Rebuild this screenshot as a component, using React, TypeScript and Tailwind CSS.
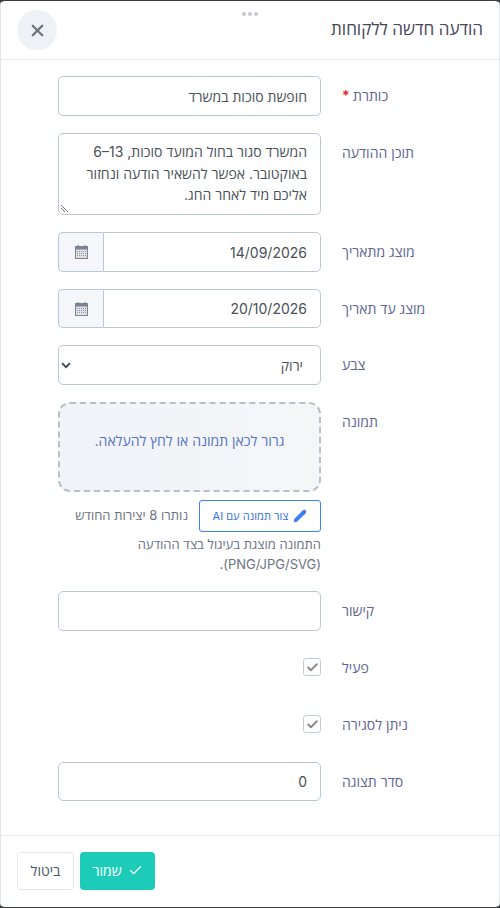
import React from "react";
import { X, Check, Pencil } from "lucide-react";

const font = "[font-family:Inter,'Open_Sans',sans-serif]";

function CalIcon() {
  return (
    <svg width="13" height="14" viewBox="0 0 13 14" fill="none">
      <rect x="0.5" y="1.5" width="12" height="12" fill="#dfe1e7" stroke="#7d8292" />
      <rect x="0" y="1" width="13" height="3.5" fill="#7d8292" />
      <rect x="2.5" y="0" width="1.2" height="2" fill="#7d8292" />
      <rect x="9.3" y="0" width="1.2" height="2" fill="#7d8292" />
      <path d="M2 6.5h9M2 8.5h9M2 10.5h9" stroke="#9297a6" strokeWidth="1" strokeDasharray="1 1" />
    </svg>
  );
}

function Row({ label, children, required }: { label: string; children: React.ReactNode; required?: boolean }) {
  return (
    <div className="flex items-start">
      <div className="ml-[21px] w-[141px] shrink-0 pt-[9px] text-left text-[14px] leading-[21px] text-[#5e6494]">
        {label}
        {required && <span className="text-[#e3242b] font-semibold"> *</span>}
      </div>
      <div className="w-[263px] shrink-0">{children}</div>
    </div>
  );
}

const inputCls = "flex items-center w-full bg-white border border-[#bcc6da] rounded-[5px] px-[13px] text-[14px] text-[#495057]";

function Checkbox() {
  return (
    <div className="w-[18px] h-[18px] bg-white border border-[#c3cbdd] rounded-[3px] flex items-center justify-center">
      <Check size={13} strokeWidth={3.5} className="text-[#8a8a8a]" />
    </div>
  );
}

function DateRow({ label, value, h }: { label: string; value: string; h: string }) {
  return (
    <Row label={label}>
      <div className={`flex ${h}`}>
        <div className="flex flex-1 items-center bg-white border border-[#bcc6da] rounded-r-[5px] px-[13px] text-[14px] text-[#495057]">
          {value}
        </div>
        <div className="w-[45px] flex items-center justify-center bg-[#f5f6f9] border border-r-0 border-[#bcc6da] rounded-l-[5px]">
          <CalIcon />
        </div>
      </div>
    </Row>
  );
}

export default function App() {
  return (
    <div dir="rtl" className={`${font} w-[500px] h-[908px] bg-[#3a3b3d]`}>
      <div className="relative flex flex-col w-[500px] h-[908px] bg-white border-x border-[#e3e5ec] border-t-[1px] border-t-[#3a3b3d] border-b-[1px] border-b-[#3a3b3d] rounded-[5px]">
        <div className="absolute top-[11px] left-1/2 -translate-x-1/2 flex gap-[2px]">
          <span className="w-[4px] h-[4px] rounded-full bg-[#c4c7ce]" />
          <span className="w-[4px] h-[4px] rounded-full bg-[#c4c7ce]" />
          <span className="w-[4px] h-[4px] rounded-full bg-[#c4c7ce]" />
        </div>
        <div className="flex items-center justify-between h-[59px] shrink-0 px-[16px] border-b border-[#e9ebef]">
          <div className="text-[17px] font-medium text-[#43455a]">הודעה חדשה ללקוחות</div>
          <div className="w-[40px] h-[40px] rounded-full bg-[#eef1f6] flex items-center justify-center">
            <X size={19} strokeWidth={2.8} className="text-[#6b7280]" />
          </div>
        </div>
        <div className="flex-1 flex flex-col pt-[16px] pr-[16px]">
          <Row label="כותרת" required>
            <div className={`${inputCls} h-[40px]`}>חופשת סוכות במשרד</div>
          </Row>
          <div className="h-[17px]" />
          <Row label="תוכן ההודעה">
            <div className="relative w-full h-[82px] bg-white border border-[#bcc6da] rounded-[5px] px-[13px] pt-[7px] text-[14px] leading-[21.5px] text-[#495057]">
              המשרד סגור בחול המועד סוכות, <bdi dir="ltr">6–13</bdi> באוקטובר. אפשר להשאיר הודעה ונחזור אליכם מיד לאחר החג.
              <svg className="absolute left-[1px] bottom-[1px]" width="9" height="9" viewBox="0 0 9 9">
                <path d="M1 1l7 7M1 4l4 4" stroke="#777" strokeWidth="1" />
              </svg>
            </div>
          </Row>
          <div className="h-[17px]" />
          <DateRow label="מוצג מתאריך" value="14/09/2026" h="h-[40px]" />
          <div className="h-[17px]" />
          <DateRow label="מוצג עד תאריך" value="20/10/2026" h="h-[39px]" />
          <div className="h-[17px]" />
          <Row label="צבע">
            <div className={`${inputCls} h-[40px] justify-between !pl-[2px] !pr-[17px]`}>
              <span>ירוק</span>
              <svg width="10" height="7" viewBox="0 0 10 7" fill="none">
                <path d="M1 1.2l4 4 4-4" stroke="#374151" strokeWidth="1.7" />
              </svg>
            </div>
          </Row>
          <div className="h-[17px]" />
          <Row label="תמונה">
            <div className="w-full h-[90px] pb-[14px] rounded-[12px] border-2 border-dashed border-[#b8bfca] bg-gradient-to-r from-[#f2f3f9] to-[#f5f6f8] flex items-center justify-center text-[14px] text-[#5473c5]">
              גרור לכאן תמונה או לחץ להעלאה.
            </div>
            <div className="flex items-center gap-[11px] mt-[8px]">
              <div className="flex items-center justify-center gap-[5px] w-[122px] h-[32px] border border-[#3b82f6] rounded-[3px] bg-white text-[#2f6fe4] text-[11px]">
                <Pencil size={14} fill="#3b82f6" strokeWidth={1.5} />
                <span>צור תמונה עם AI</span>
              </div>
              <span className="text-[13px] text-[#6b7280]">נותרו 8 יצירות החודש</span>
            </div>
            <div className="mt-[3px] text-[13px] leading-[19.5px] text-[#6b7280]">
              התמונה מוצגת בעיגול בצד ההודעה (PNG/JPG/SVG).
            </div>
          </Row>
          <div className="h-[17px]" />
          <Row label="קישור">
            <div className={`${inputCls} h-[40px]`} />
          </Row>
          <div className="h-[17px]" />
          <Row label="פעיל">
            <div className="h-[40px] pt-[10px]"><Checkbox /></div>
          </Row>
          <div className="h-[17px]" />
          <Row label="ניתן לסגירה">
            <div className="h-[40px] pt-[10px]"><Checkbox /></div>
          </Row>
          <div className="h-[17px]" />
          <Row label="סדר תצוגה">
            <div className={`${inputCls} h-[39px]`}>0</div>
          </Row>
        </div>
        <div className="h-[72px] shrink-0 border-t border-[#e9ebef] flex items-center justify-end pl-[16px] pb-[2px] gap-[6px]">
          <div className="flex items-center justify-center gap-[6px] w-[75px] h-[38px] bg-[#1dccb8] rounded-[4px] text-white text-[14px] font-medium">
            <Check size={15} strokeWidth={2.2} />
            <span>שמור</span>
          </div>
          <div className="flex items-center justify-center w-[57px] h-[38px] border border-[#e5e7eb] rounded-[4px] text-[14px] text-[#4b5563]">ביטול</div>
        </div>
      </div>
    </div>
  );
}
